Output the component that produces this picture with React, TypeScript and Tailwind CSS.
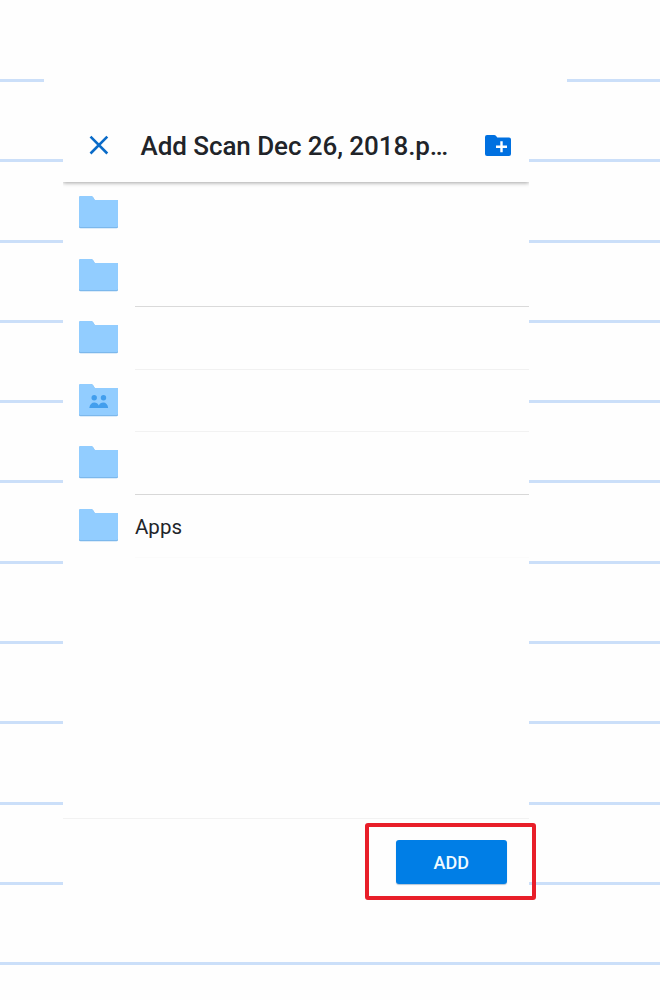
import React from "react";

const rows = [
  { name: "", line: "border-transparent" },
  { name: "", line: "border-[#dadada]" },
  { name: "", line: "border-[#f1f1f1]" },
  { name: "", line: "border-[#f2f2f2]", shared: true },
  { name: "", line: "border-[#d8d8d8]" },
  { name: "Apps", line: "border-[#fbfbfb]" },
];

function Folder({ shared }: { shared?: boolean }) {
  return (
    <svg className="mt-[14px] ml-4 h-[33px] w-[39px] shrink-0" viewBox="0 0 39 33">
      <path d="M0 1.5Q0 0 1.5 0H12Q13.6 0 14.3 1.5L15.8 4H38Q39 4 39 5V31Q39 32.2 37.5 32.2H1.5Q0 32.2 0 31Z" fill="#7cb8ec" />
      <path d="M0 1.5Q0 0 1.5 0H12Q13.6 0 14.3 1.5L15.8 4H38Q39 4 39 5V30Q39 31.1 37.5 31.1H1.5Q0 31.1 0 30Z" fill="#92cdff" />
      {shared && (
        <g fill="#429eed">
          <circle cx="15.2" cy="13.8" r="2.7" />
          <circle cx="24.5" cy="13.8" r="2.7" />
          <path d="M10.3 24C10.8 20.5 12.7 18.6 15.3 18.6C17.4 18.6 19 19.7 19.8 21.5C20.6 19.7 22.2 18.6 24.3 18.6C26.9 18.6 28.7 20.5 29.2 24Z" />
        </g>
      )}
    </svg>
  );
}

function RuledPaper() {
  return (
    <div className="col-start-1 row-start-1 flex flex-col overflow-hidden">
      <div className="flex h-[82px] shrink-0 items-end justify-between">
        <div className="h-[3px] w-11 bg-[#cbdff9]" />
        <div className="h-[3px] w-[93px] bg-[#cbdff9]" />
      </div>
      {Array.from({ length: 11 }, (_, i) => (
        <div key={i} className="h-[80.3px] shrink-0 border-b-[3px] border-[#cbdff9]" />
      ))}
    </div>
  );
}

export default function App() {
  return (
    <main className="grid h-[1000px] w-[660px] grid-cols-1 grid-rows-1 overflow-hidden bg-[#fefefe] font-['Roboto',sans-serif] text-[#212429]">
      <RuledPaper />
      <section className="z-10 col-start-1 row-start-1 mt-[97px] ml-[63px] flex h-[824px] w-[466px] flex-col bg-[#fefefe]">
        <div className="h-[91px] shrink-0 overflow-hidden">
          <header className="flex h-[85px] items-center bg-[#fefefe] pt-[11px] shadow-[0_1px_4px_rgba(0,0,0,0.36)]">
            <svg className="ml-[26px] h-5 w-5 shrink-0" viewBox="0 0 20 20" fill="none" stroke="#0a6bc8" strokeWidth="2.6">
              <path d="M1.5 1.7L18.3 18.5M18.3 1.7L1.5 18.5" />
            </svg>
            <h1 className="ml-[31.5px] w-[343.5px] shrink-0 pt-[2px] text-[26px] leading-8 font-medium tracking-[-0.07px] whitespace-nowrap">Add Scan Dec 26, 2018.p…</h1>
            <svg className="h-[21px] w-[27px] shrink-0" viewBox="0 0 27 21">
              <path d="M1 2Q1 0 3 0H10Q11.4 0 12.1 1L13.3 2.5H25Q27 2.5 27 4.5V19Q27 21 25 21H3Q1 21 1 19Z" fill="#0070e0" />
              <path d="M17.5 6.2V17.2M12 11.7H23" stroke="white" strokeWidth="2.4" />
            </svg>
          </header>
        </div>
        <div className="-mt-[6px] flex flex-1 flex-col">
          {rows.map((row, i) => (
            <div key={i} className="flex h-[62.6px] shrink-0">
              <Folder shared={row.shared} />
              <div className={`ml-[17px] flex flex-1 items-center border-b pt-1 text-[20.5px] ${row.line}`}>{row.name}</div>
            </div>
          ))}
        </div>
        <footer className="flex h-[103px] shrink-0 border-t border-[#f2f2f2]">
          <div className="mt-1 ml-[302px] flex h-[77px] w-[171.4px] shrink-0 items-center justify-center rounded-[3px] border-[4px] border-[#e81e29]">
            <button className="ml-[1.2px] h-[44px] w-[111.5px] rounded-[3px] bg-[#007ee6] pt-px text-[18px] font-medium text-[#effaff] shadow-[0_1px_1px_rgba(0,60,120,0.3)]">ADD</button>
          </div>
        </footer>
      </section>
    </main>
  );
}
